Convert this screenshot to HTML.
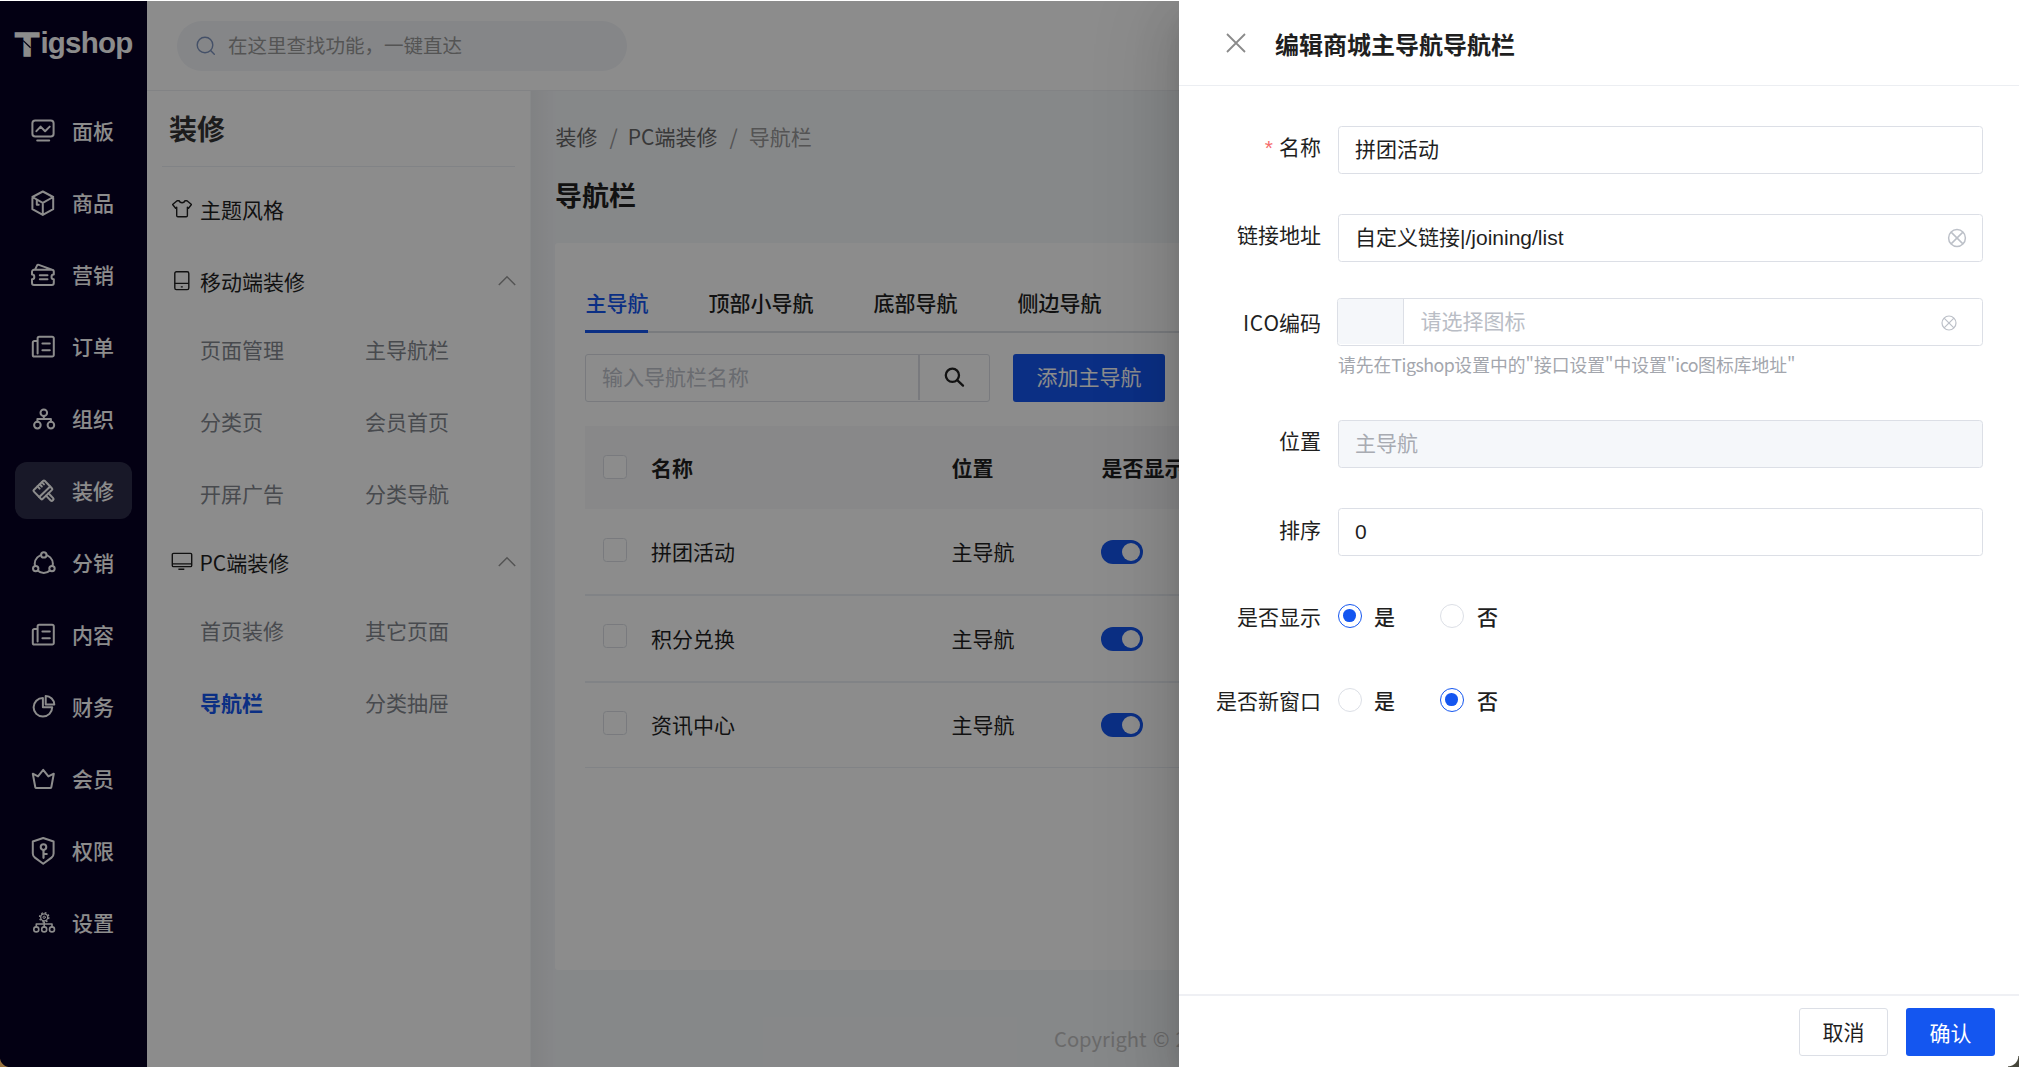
<!DOCTYPE html>
<html lang="zh-CN">
<head>
<meta charset="utf-8">
<title>Tigshop</title>
<style>
*{box-sizing:border-box;margin:0;padding:0}
html,body{width:2019px;height:1067px;overflow:hidden;background:#fff}
body{font-family:"Noto Sans CJK SC","Liberation Sans",sans-serif;font-size:21px;color:#333;-webkit-font-smoothing:antialiased}
#root{position:relative;width:2019px;height:1067px;overflow:hidden;background:#f5f7fa}
.abs{position:absolute}
.t{position:absolute;white-space:nowrap;line-height:30px;height:30px}
/* ---------- sidebar 1 ---------- */
#s1{position:absolute;left:0;top:0;width:147px;height:1067px;background:#070024}
#s1 .logo{position:absolute;left:14px;top:22px;width:122px;height:44px}
#s1 .mi{position:absolute;left:15px;width:117px;height:57px;border-radius:12px}
#s1 .mi.on{background:#2d2d49}
#s1 .mi svg{position:absolute;left:16.4px;top:16.4px;width:24px;height:24px;fill:none;stroke:#fff;stroke-width:2;stroke-linecap:round;stroke-linejoin:round}
#s1 .mi span{position:absolute;left:57px;top:13px;line-height:30px;font-size:21px;font-weight:500;color:#fff;white-space:nowrap}
/* ---------- sidebar 2 ---------- */
#s2{position:absolute;left:147px;top:90px;width:383px;height:977px;background:#fff}
#s2 .ttl{left:22px;top:20.8px;font-size:28px;font-weight:700;color:#333;line-height:34px;height:34px}
#s2 .hr{position:absolute;left:15px;top:76px;width:353px;height:1px;background:#ebeef5}
#s2 .g{font-size:21px;color:#1f1f1f}
#s2 .s{font-size:21px;color:#84888f}
#s2 .s.on{color:#1456f0;font-weight:700}
#s2 svg.ic{position:absolute;width:22px;height:22px;fill:none;stroke:#1f1f1f;stroke-width:1.4;stroke-linejoin:round;stroke-linecap:round}
#s2 svg.ar{position:absolute;width:20px;height:12px;fill:none;stroke:#999;stroke-width:1.5}
/* ---------- header ---------- */
#hd{position:absolute;left:147px;top:0;width:1872px;height:91px;background:#fff;border-bottom:1px solid #edeff2}
#hd .sb{position:absolute;left:30px;top:21px;width:450px;height:50px;border-radius:25px;background:#f2f4f8}
#hd .sb svg{position:absolute;left:17.8px;top:13.6px;width:22px;height:22px;fill:none;stroke:#7d93bd;stroke-width:1.4;stroke-linecap:round}
#hd .sb span{position:absolute;left:51px;top:9px;line-height:30px;font-size:19.5px;color:#999;white-space:nowrap}
/* ---------- main ---------- */
#mn{position:absolute;left:531px;top:91px;width:1488px;height:976px;background:#f5f7fa}
#mn .lsh{position:absolute;left:0;top:0;width:26px;height:976px;background:linear-gradient(90deg,rgba(0,0,0,.045),rgba(0,0,0,0))}
#mn>.t{margin-left:-1px}
#card{position:absolute;left:24px;top:152px;width:1450px;height:727px;background:#fff;border-radius:3px}

#mn .bc{font-size:21px;color:#666}
#mn .bc i{font-style:normal;color:#999;padding:0 10px 0 12px}
#mn .bc i+i{padding:0 11px 0 12px}
#mn .bc b{font-weight:400;color:#999}
#mn .pt{font-size:27px;font-weight:700;color:#1f1f1f;line-height:36px;height:36px}
#card .tab{font-size:21px;font-weight:500;color:#1f1f1f}
#card .tab.on{color:#1456f0}
#card .tl{position:absolute;left:30px;top:88.2px;width:1420px;height:2px;background:#dde0e6}
#card .tb{position:absolute;left:30px;top:87.2px;width:63px;height:3px;background:#1456f0}
#card .inp{position:absolute;left:30px;top:111px;width:405px;height:48px;border:1.5px solid #dcdfe6;border-radius:3px;background:#fff}
#card .inp .dv{position:absolute;left:332px;top:0;width:1.5px;height:45px;background:#dcdfe6}
#card .inp span{position:absolute;left:16px;top:5.5px;line-height:30px;font-size:21px;color:#c0c4cc;white-space:nowrap}
#card .inp svg{position:absolute;left:356px;top:10px;width:24px;height:24px;fill:none;stroke:#222;stroke-width:2.3;stroke-linecap:round}
#card .btn{position:absolute;left:458px;top:111px;width:152px;height:48px;border-radius:3px;background:#1456f0;color:#fff;font-size:21px;line-height:45px;text-align:center}
#card .th{position:absolute;left:30px;top:183px;width:1420px;height:83px;background:#f7f8fa}
#card .cb{position:absolute;left:48px;width:24px;height:24px;border:1.5px solid #dcdfe6;border-radius:3.5px;background:#fff}
#card .rl{position:absolute;left:30px;width:1420px;height:1.5px;background:#eceff5}
#card .hd{font-weight:700;color:#1f1f1f}
#card .td{color:#1f1f1f}
#card .sw{position:absolute;left:546px;width:42px;height:24px;border-radius:12px;background:#1456f0}
#card .sw:after{content:"";position:absolute;left:21px;top:3px;width:18px;height:18px;border-radius:9px;background:#fff}
#mn .cp{font-size:20.2px;color:#c2c2c2;left:524px;top:932.5px;word-spacing:1.5px}
/* overlay + drawer */
#ov{position:absolute;left:0;top:0;width:2019px;height:1067px;background:rgba(0,0,0,.45)}
#dr{position:absolute;left:1179px;top:0;width:840px;height:1067px;background:#fff;box-shadow:0 24px 72px 24px rgba(0,0,0,.08),0 18px 48px rgba(0,0,0,.12),0 12px 24px -12px rgba(0,0,0,.16)}

#dr .x{position:absolute;left:47px;top:33.3px;width:20px;height:20px;fill:none;stroke:#8a8a8a;stroke-width:1.8}
#dr .dt{left:96px;top:27px;font-size:24px;font-weight:700;color:#1f1f1f;line-height:34px;height:34px}
#dr .hl{position:absolute;left:0;top:84.5px;width:840px;height:1.5px;background:#eceef2}
#dr .lb{width:142px;left:0;text-align:right;font-size:21px;color:#1f1f1f}
#dr .lb u{text-decoration:none;letter-spacing:.8px;margin-right:-.8px}
#dr .hint u{text-decoration:none;letter-spacing:-.5px}
#dr .lb em{font-style:normal;color:#f56c6c;margin-right:6px;font-family:"Liberation Sans",sans-serif}
#dr .in{position:absolute;left:159px;width:644.7px;height:47.5px;border:1.7px solid #dcdfe6;border-radius:3.5px;background:#fff;font-family:"Liberation Sans","Noto Sans CJK SC",sans-serif}
#dr .in span{position:absolute;left:16px;top:8px;line-height:30px;font-size:21px;color:#1f1f1f;white-space:nowrap}
#dr .in.dis{background:#f5f7fa}
#dr .in.dis span{color:#a8abb2}
#dr .in .ph{color:#b9bdc5}
#dr .in .pre{position:absolute;left:0;top:0;width:66px;height:45px;background:#f5f7fa;border-right:1.5px solid #dcdfe6;border-radius:3px 0 0 3px}
#dr .in svg{position:absolute;fill:none;stroke:#bcc0c8;stroke-width:1.5}
#dr .hint{left:159px;font-size:17.8px;color:#a3a6ad;line-height:26px;height:26px}
#dr .rd{position:absolute;width:24px;height:24px;border-radius:12px;border:1.5px solid #dcdfe6;background:#fff}
#dr .rd.on{border-color:#1456f0}
#dr .rd.on:after{content:"";position:absolute;left:4.4px;top:4.4px;width:12.6px;height:12.6px;border-radius:6.3px;background:#1456f0}
#dr .rt{font-size:21px;font-weight:500;color:#1f1f1f}
#dr .fl{position:absolute;left:0;top:994px;width:840px;height:1.5px;background:#eff0f4}
#dr .b1,#dr .b2{position:absolute;top:1008px;width:89px;height:48px;border-radius:3px;font-size:21px;line-height:45px;text-align:center}
#dr .b1{left:620px;border:1.5px solid #dcdfe6;color:#1f1f1f;background:#fff}
#dr .b2{left:727px;background:#1456f0;color:#fff;line-height:48px}
#cbr{position:absolute;right:0;bottom:0;width:11px;height:11px;background:radial-gradient(circle at 0 0,rgba(70,70,58,0) 9.8px,#46463a 10.8px)}
#cbl{position:absolute;left:0;bottom:0;width:10px;height:10px;background:radial-gradient(circle at 100% 0,rgba(150,110,60,0) 9.6px,#96703c 10.6px)}
#topline{position:absolute;left:0;top:0;width:2019px;height:1px;background:#fff}
</style>
</head>
<body>
<div id="root">
<div id="s1">
<svg class="logo" viewBox="0 0 122 44" style="overflow:visible">
<text x="0" y="34.3" font-family="Liberation Sans, sans-serif" font-weight="700" font-size="33" fill="#fff" stroke="#fff" stroke-width="1.3" stroke-linejoin="miter" transform="translate(0.9 0) scale(1.2 1)">T</text>
<path d="M9.2 18.6 L16.6 25.8" stroke="#070024" stroke-width="1.3" fill="none"/>
<text x="26.4" y="31" font-family="Liberation Sans, sans-serif" font-weight="700" font-size="29.5" letter-spacing="-0.75" fill="#fff">igshop</text>
</svg>
<div class="mi" style="top:102px"><svg viewBox="0 0 24 24" style="overflow:visible"><rect x="1.4" y="2.4" width="21.2" height="16.1" rx="2.8"/><path d="M5.4 13.2 9.6 8.6 14.1 13.2 18.7 8.6M6.2 22.5H18.2"/></svg><span>面板</span></div>
<div class="mi" style="top:174px"><svg viewBox="0 0 24 24" style="overflow:visible;margin-top:0.5px;margin-left:0"><path d="M11.8 0.5 22.2 6V18.2L11.8 23.9 1.4 18.2V6ZM1.4 6 11.8 11.8 22.2 6M11.8 11.8V23.9M5.8 9V13.7H7.7"/></svg><span>商品</span></div>
<div class="mi" style="top:246px"><svg viewBox="0 0 24 24" style="overflow:visible;margin-top:1.1px"><path d="M3 6.8H20.8A2 2 0 0 1 22.8 8.8V11.6A2.3 2.3 0 0 0 22.8 16.2V20A2 2 0 0 1 20.8 22H3A2 2 0 0 1 1 20V16.2A2.3 2.3 0 0 0 1 11.6V8.8A2 2 0 0 1 3 6.8ZM4 6.6 6 2.6Q6.6 1.5 7.8 1.9L21 6.6M8.8 12.3H16.5M8.8 16.3H16.5"/></svg><span>营销</span></div>
<div class="mi" style="top:318px"><svg viewBox="0 0 24 24" style="overflow:visible;margin-top:1.1px"><path d="M6.6 18.4V3.4A1.6 1.6 0 0 1 8.2 1.8H21.2A1.6 1.6 0 0 1 22.8 3.4V19.9A1.6 1.6 0 0 1 21.2 21.5H3.4A1.6 1.6 0 0 1 1.8 19.9V7.6A1.6 1.6 0 0 1 3.4 6H6.6M11.4 8.6H18.8M11.4 15.3H18.8"/></svg><span>订单</span></div>
<div class="mi" style="top:390px"><svg viewBox="0 0 24 24" style="overflow:visible;margin-top:1.1px;margin-left:0.5px"><circle cx="11.8" cy="5.7" r="3.3"/><circle cx="5.4" cy="18.1" r="3.3"/><circle cx="18.9" cy="18.1" r="3.3"/><path d="M11.8 9V11.9M5.4 14.8V11.9H18.9V14.8"/></svg><span>组织</span></div>
<div class="mi on" style="top:462px"><svg viewBox="0 0 24 24" style="overflow:visible;margin-top:1.1px;margin-left:0"><g transform="translate(11.9 10.9) rotate(-44)"><rect x="-7.6" y="-6.3" width="15.2" height="12.6" rx="1"/><path d="M-7.6 2.6H7.6M4.6 -6.3V-3.2M1.6 -6.3V-3.2M-1.4 -6.3V-3.2M-1.7 6.3V12.7A1.7 1.7 0 0 0 1.7 12.7V6.3"/></g></svg><span>装修</span></div>
<div class="mi" style="top:534px"><svg viewBox="0 0 24 24" style="overflow:visible;margin-top:1.1px;margin-left:0.6px"><circle cx="11.8" cy="12.8" r="9.1"/><circle cx="11.8" cy="3.9" r="2.7" fill="#070024"/><circle cx="3.7" cy="17.6" r="2.7" fill="#070024"/><circle cx="20" cy="17.6" r="2.7" fill="#070024"/></svg><span>分销</span></div>
<div class="mi" style="top:606px"><svg viewBox="0 0 24 24" style="overflow:visible;margin-top:1.1px"><path d="M6.6 18.4V3.4A1.6 1.6 0 0 1 8.2 1.8H21.2A1.6 1.6 0 0 1 22.8 3.4V19.9A1.6 1.6 0 0 1 21.2 21.5H3.4A1.6 1.6 0 0 1 1.8 19.9V7.6A1.6 1.6 0 0 1 3.4 6H6.6M11.4 8.6H18.8M11.4 15.3H18.8"/></svg><span>内容</span></div>
<div class="mi" style="top:678px"><svg viewBox="0 0 24 24" style="overflow:visible;margin-top:1.1px;margin-left:0.8px"><path d="M10.9 3A9.3 9.3 0 1 0 20.2 12.3H10.9ZM13.7 9.5V1.1A8.6 8.6 0 0 1 22.3 9.5Z"/></svg><span>财务</span></div>
<div class="mi" style="top:750px"><svg viewBox="0 0 24 24" style="overflow:visible;margin-top:1.1px;margin-left:0"><path d="M1.8 6.7 7 9.4 12.2 2.8 17.4 9.4 22.8 6.7 20.3 20.2Q20.1 21.1 19.2 21.1H5.4Q4.5 21.1 4.3 20.2Z"/></svg><span>会员</span></div>
<div class="mi" style="top:822px"><svg viewBox="0 0 24 24" style="overflow:visible;margin-top:1.1px;margin-left:0"><path d="M12.2 -1 22.6 2.5V14.4Q22.6 17 20.5 18.6L12.2 24.8 3.9 18.6Q1.8 17 1.8 14.4V2.5Z"/><circle cx="12.5" cy="8.1" r="2.8"/><path d="M12.5 11V18.8M12.5 15H15.7" stroke-width="2.2"/></svg><span>权限</span></div>
<div class="mi" style="top:894px"><svg viewBox="0 0 24 24" style="overflow:visible;margin-top:1.1px;margin-left:0.8px;stroke-width:1.6"><circle cx="12.2" cy="6.3" r="3.5" stroke-width="1.3"/><circle cx="12.2" cy="6.3" r="4.6" stroke-width="1.5" stroke-dasharray="1.75 1.86" stroke-linecap="butt"/><circle cx="12.2" cy="6.3" r="1.2" stroke-width="1"/><path d="M12.2 11V13M4.3 15.9V13H20V15.9M12.2 13V15.9"/><circle cx="4.3" cy="18.4" r="2.5"/><circle cx="12.2" cy="18.4" r="2.5"/><circle cx="20" cy="18.4" r="2.5"/></svg><span>设置</span></div>
</div>

<div id="s2">
<div class="t ttl">装修</div>
<div class="hr"></div>
<svg class="ic" viewBox="0 0 20 20" style="left:24.9px;top:109.8px;width:20px;height:20px"><path d="M5.1 0.7 0.6 4.5 3.6 8.2 4.7 7.3V15.6Q4.7 16.8 5.9 16.8H14.2Q15.4 16.8 15.4 15.6V7.3L16.5 8.2 19.5 4.5 15 0.7H12.9A2.9 2.5 0 0 1 7.2 0.7Z"/></svg>
<div class="t g" style="left:53px;top:103.5px">主题风格</div>
<svg class="ic" viewBox="0 0 20 20" style="left:25px;top:181px;width:20px;height:20px"><rect x="2.8" y="0.8" width="14" height="17.8" rx="1.6"/><path d="M2.8 12.4H16.8M8.8 15.9H10.8" stroke-linecap="butt"/></svg>
<div class="t g" style="left:53px;top:176px">移动端装修</div>
<svg class="ar" viewBox="0 0 20 12" style="left:350px;top:185px"><path d="M1.8 10 10 1.8 18.2 10"/></svg>
<div class="t s" style="left:53px;top:244px">页面管理</div><div class="t s" style="left:218px;top:244px">主导航栏</div>
<div class="t s" style="left:53px;top:316px">分类页</div><div class="t s" style="left:218px;top:316px">会员首页</div>
<div class="t s" style="left:53px;top:388px">开屏广告</div><div class="t s" style="left:218px;top:388px">分类导航</div>
<svg class="ic" viewBox="0 0 22 20" style="left:23.5px;top:462px;width:22px;height:20px"><rect x="1.3" y="1.4" width="19.4" height="13.2" rx="1.2"/><path d="M1.3 11.9H20.7M7.4 17.3H13.3" stroke-linecap="butt"/></svg>
<div class="t g" style="left:52.5px;top:457px">PC端装修</div>
<svg class="ar" viewBox="0 0 20 12" style="left:350px;top:466px"><path d="M1.8 10 10 1.8 18.2 10"/></svg>
<div class="t s" style="left:53px;top:525px">首页装修</div><div class="t s" style="left:218px;top:525px">其它页面</div>
<div class="t s on" style="left:53px;top:597px">导航栏</div><div class="t s" style="left:218px;top:597px">分类抽屉</div>
</div>

<div id="hd">
<div class="sb"><svg viewBox="0 0 22 22"><circle cx="10" cy="10" r="7.8"/><path d="M15.6 15.6 19.3 19.3"/></svg><span>在这里查找功能，一键直达</span></div>
</div>

<div id="mn">
<div class="lsh"></div>
<div class="t bc" style="left:25.5px;top:29.8px">装修<i>/</i>PC端装修<i>/</i><b>导航栏</b></div>
<div class="t pt" style="left:25px;top:86.2px">导航栏</div>
<div id="card">
<div class="t tab on" style="left:30.5px;top:43.5px">主导航</div>
<div class="t tab" style="left:153.5px;top:43.5px">顶部小导航</div>
<div class="t tab" style="left:318.5px;top:43.5px">底部导航</div>
<div class="t tab" style="left:462.5px;top:43.5px">侧边导航</div>
<div class="tl"></div><div class="tb"></div>
<div class="inp"><span>输入导航栏名称</span><div class="dv"></div><svg viewBox="0 0 24 24"><circle cx="10.4" cy="10.3" r="6.6"/><path d="M15.2 15.1 21 20.6"/></svg></div>
<div class="btn">添加主导航</div>
<div class="th"></div>
<div class="cb" style="top:212px"></div>
<div class="t hd" style="left:96px;top:209px">名称</div>
<div class="t hd" style="left:396.5px;top:209px">位置</div>
<div class="t hd" style="left:546.5px;top:209px">是否显示</div>
<div class="cb" style="top:294.5px"></div><div class="t td" style="left:96px;top:293px">拼团活动</div><div class="t td" style="left:396.5px;top:293px">主导航</div><div class="sw" style="top:297px"></div><div class="rl" style="top:351px"></div>
<div class="cb" style="top:381px"></div><div class="t td" style="left:96px;top:379.5px">积分兑换</div><div class="t td" style="left:396.5px;top:379.5px">主导航</div><div class="sw" style="top:383.5px"></div><div class="rl" style="top:438px"></div>
<div class="cb" style="top:467.5px"></div><div class="t td" style="left:96px;top:466px">资讯中心</div><div class="t td" style="left:396.5px;top:466px">主导航</div><div class="sw" style="top:470px"></div><div class="rl" style="top:523.5px"></div>
</div>
<div class="t cp">Copyright © 2024</div>
</div>

<div id="ov"></div>
<div id="dr">
<svg class="x" viewBox="0 0 20 20"><path d="M1 1 19 19M19 1 1 19"/></svg>
<div class="t dt">编辑商城主导航导航栏</div>
<div class="hl"></div>
<div class="t lb" style="top:131px"><em>*</em>名称</div>
<div class="in" style="top:126px"><span>拼团活动</span></div>
<div class="t lb" style="top:219px">链接地址</div>
<div class="in" style="top:214px"><span>自定义链接|/joining/list</span><svg viewBox="0 0 20 20" style="left:608.3px;top:12.7px;width:20px;height:20px"><circle cx="10" cy="10" r="8.4"/><path d="M4.1 4.1 15.9 15.9M15.9 4.1 4.1 15.9"/></svg></div>
<div class="t lb" style="top:307px"><u>ICO</u>编码</div>
<div class="in" style="top:298px;left:158px;width:645.7px"><div class="pre"></div><span class="ph" style="left:82.5px;top:8px">请选择图标</span><svg viewBox="0 0 16 16" style="left:603px;top:15.5px;width:16px;height:16px;stroke-width:1.2"><circle cx="8" cy="8" r="7"/><path d="M3.1 3.1 12.9 12.9M12.9 3.1 3.1 12.9"/></svg></div>
<div class="t hint" style="top:351px">请先在<u>Tigshop</u>设置中的"接口设置"中设置"<u>ico</u>图标库地址"</div>
<div class="t lb" style="top:425px">位置</div>
<div class="in dis" style="top:420px"><span>主导航</span></div>
<div class="t lb" style="top:513.5px">排序</div>
<div class="in" style="top:508px"><span>0</span></div>
<div class="t lb" style="top:600.5px">是否显示</div>
<div class="rd on" style="left:158.8px;top:603.8px"></div><div class="t rt" style="left:195px;top:600.5px">是</div>
<div class="rd" style="left:260.8px;top:603.8px"></div><div class="t rt" style="left:298px;top:600.5px">否</div>
<div class="t lb" style="top:684.5px">是否新窗口</div>
<div class="rd" style="left:158.8px;top:688px"></div><div class="t rt" style="left:195px;top:684.5px">是</div>
<div class="rd on" style="left:260.8px;top:688px"></div><div class="t rt" style="left:298px;top:684.5px">否</div>
<div class="fl"></div>
<div class="b1">取消</div><div class="b2">确认</div>
</div>

<div id="cbr"></div><div id="cbl"></div><div id="topline"></div>
</div>
</body>
</html>
